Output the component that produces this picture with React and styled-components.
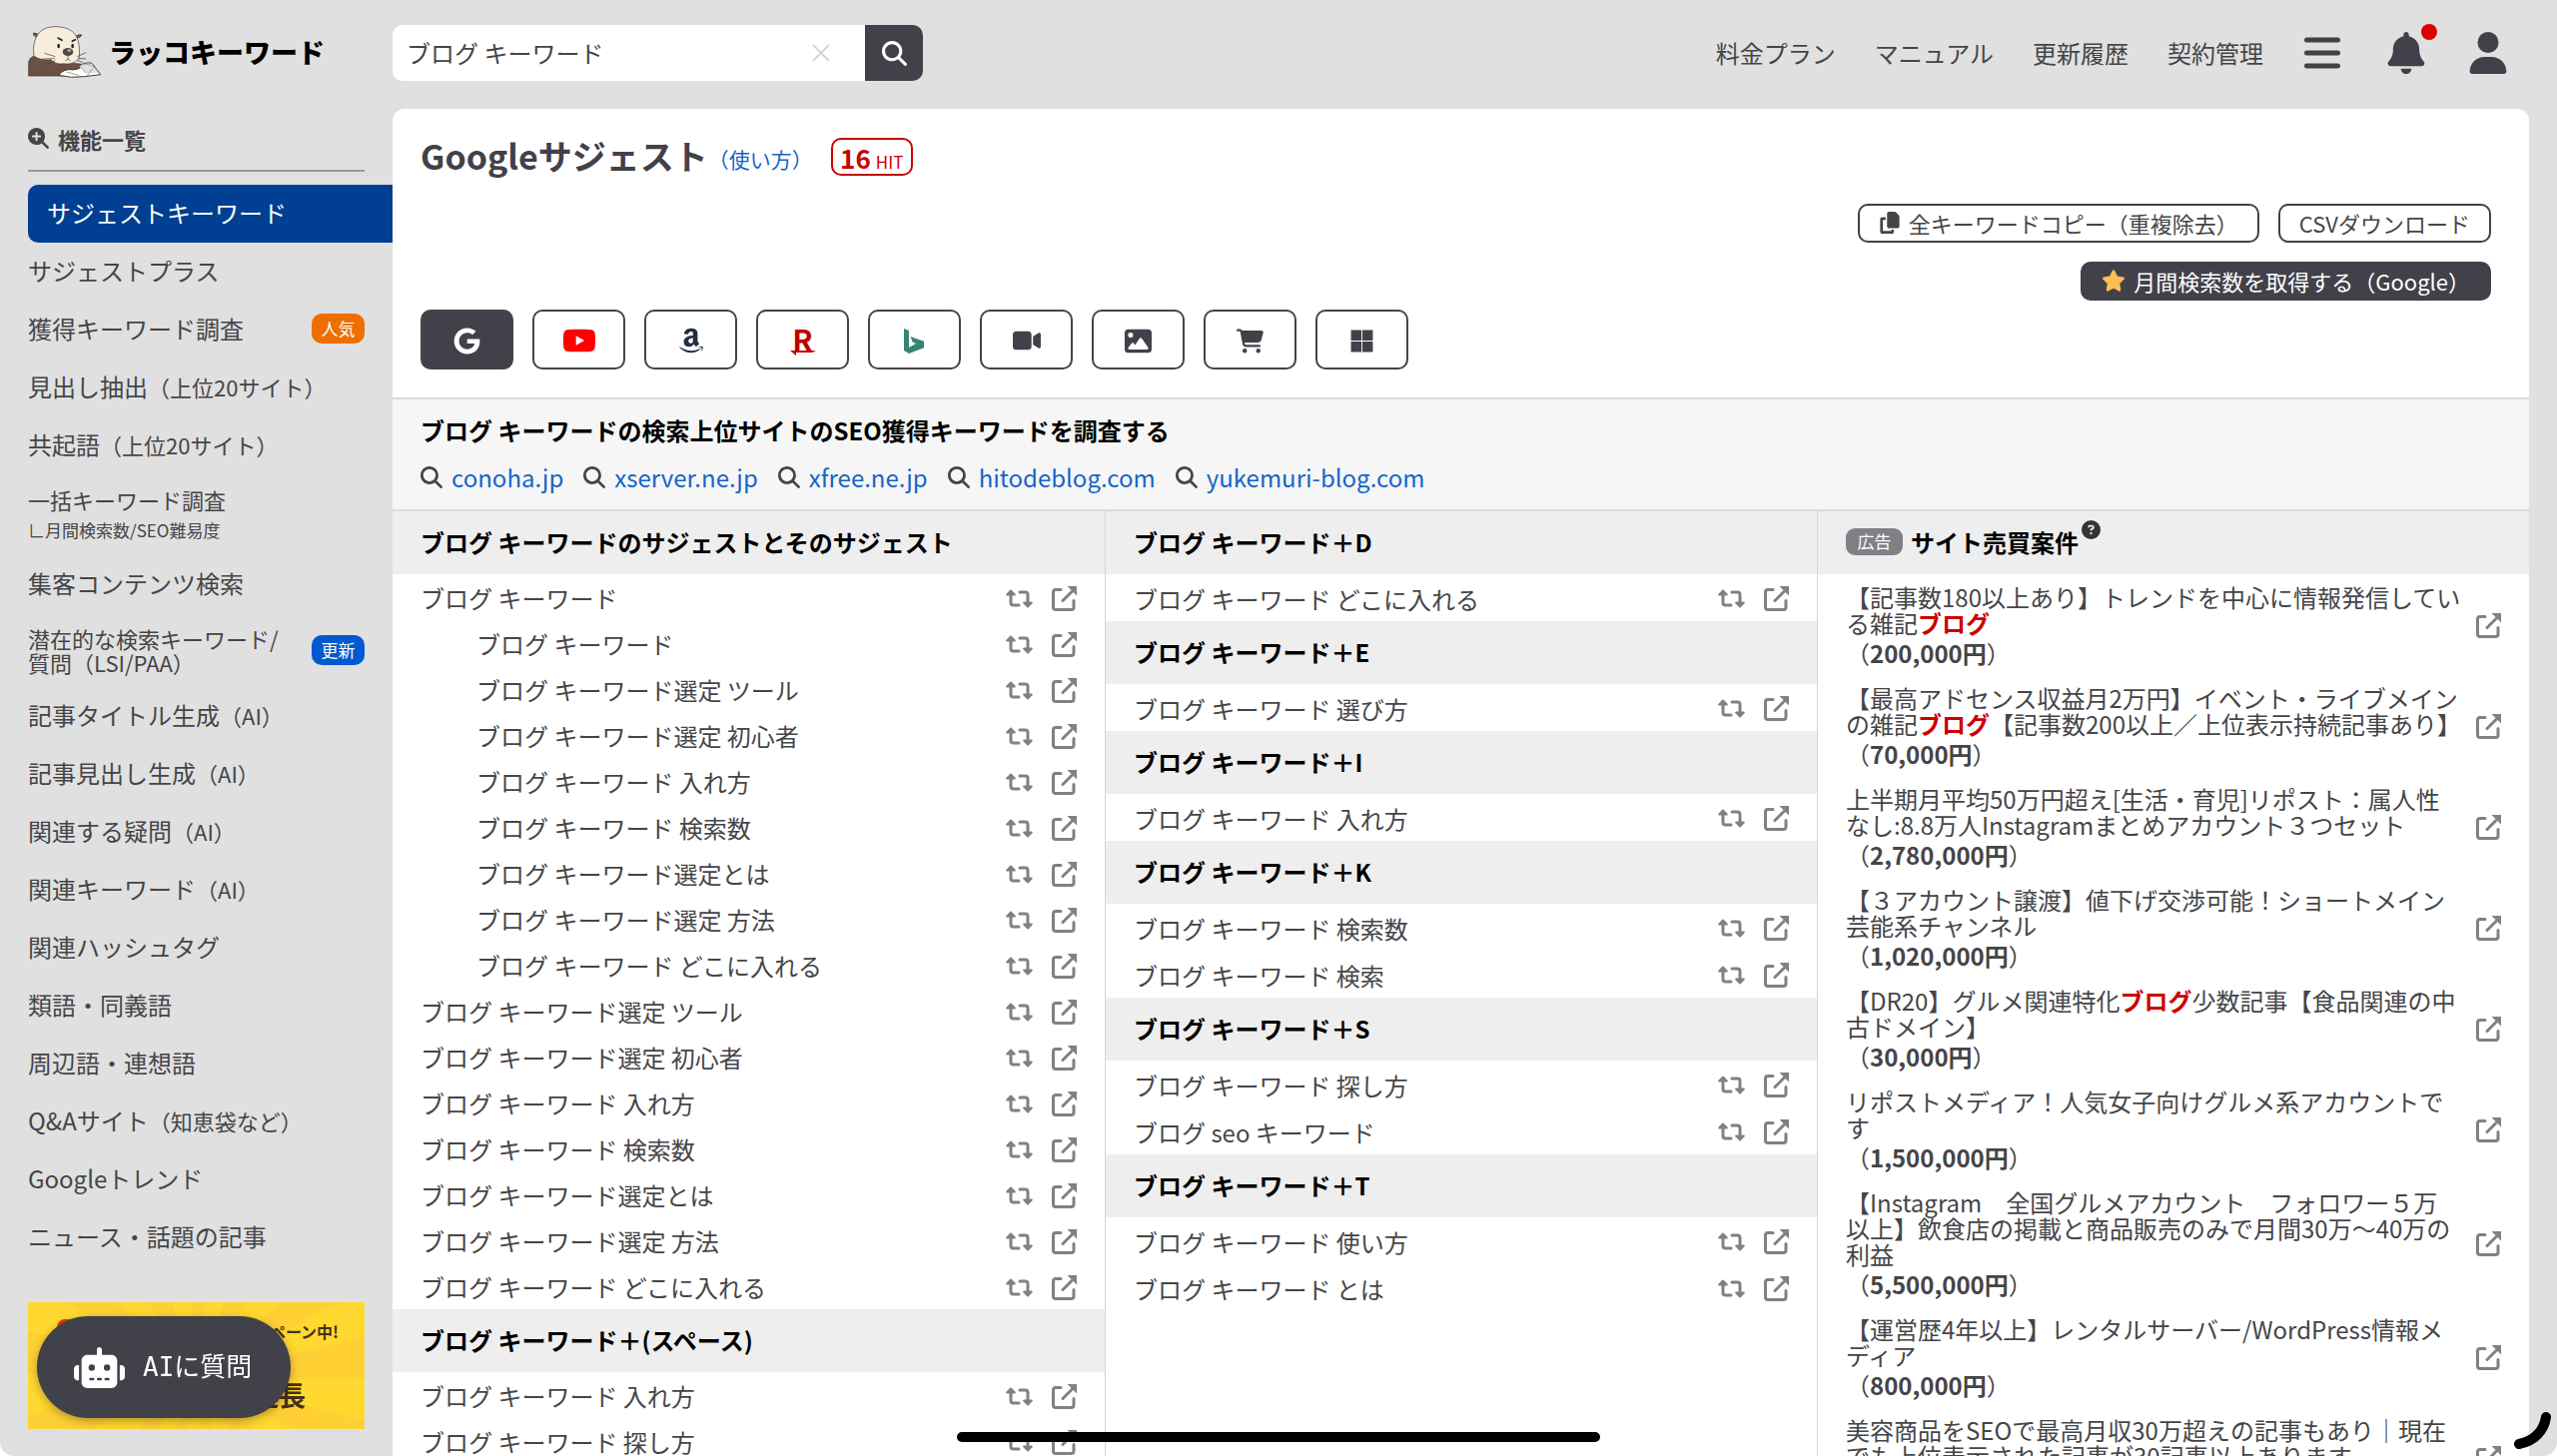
import React from "react";
import styled, { createGlobalStyle, css } from "styled-components";
import {
  FaAmazon,
  FaBell,
  FaCartShopping,
  FaCircleQuestion,
  FaCopy,
  FaGoogle,
  FaImage,
  FaMagnifyingGlass,
  FaMagnifyingGlassPlus,
  FaMicrosoft,
  FaRobot,
  FaStar,
  FaUser,
  FaVideo,
  FaYoutube,
} from "react-icons/fa6";

const dark = "#414149";
const text = "#454548";
const grey = "#808087";
const line = "#dcdcdc";
const blue = "#1465c9";
const red = "#cb0000";

const GlobalStyle = createGlobalStyle`
  *, *::before, *::after {
    box-sizing: border-box;
  }
  body {
    margin: 0;
    background: #fff;
    color: ${text};
    font-family: "Noto Sans CJK JP", "Noto Sans", sans-serif;
    font-size: 24px;
    line-height: 36px;
  }
  h1, h2, ul, p {
    margin: 0;
    padding: 0;
  }
  ul {
    list-style: none;
  }
  a {
    color: inherit;
    text-decoration: none;
  }
  button, input {
    margin: 0;
    padding: 0;
    border: 0;
    background: none;
    color: inherit;
    font: inherit;
  }
  svg {
    display: block;
    flex: none;
  }
`;

/* ---------- frame ---------- */

const Page = styled.div`
  display: flex;
  flex-direction: column;
  height: 100vh;
  overflow: hidden;
  background: #e0e0e0;
  border-radius: 0 0 14px 14px;
`;

const Header = styled.header`
  display: flex;
  align-items: center;
  padding: 25px 52px 28px 28px;
`;

const Logo = styled.a`
  display: flex;
  align-items: center;
  gap: 7px;
  width: 365px;
  padding-bottom: 2px;
  color: #000;
  font-size: 27px;
  font-weight: 900;
`;

const SearchForm = styled.form`
  display: flex;
  height: 56px;
  overflow: hidden;
  border-radius: 10px;
  background: #fff;
`;

const SearchInput = styled.input`
  width: 412px;
  padding-left: 14px;
  outline: none;
`;

const ClearButton = styled.button`
  width: 34px;
  margin-right: 27px;
  display: grid;
  place-items: center;
  color: #d4d4d4;
`;

const SearchButton = styled.button`
  display: grid;
  place-items: center;
  width: 58px;
  background: ${dark};
  color: #fff;
`;

const HeaderNav = styled.nav`
  display: flex;
  gap: 39px;
  margin-left: auto;
`;

const HeaderIcons = styled.div`
  display: flex;
  align-items: center;
  gap: 44px;
  margin-left: 40px;
  color: ${dark};
`;

const IconButton = styled.button`
  position: relative;
  display: grid;
  place-items: center;
  width: 38px;
  height: 42px;
`;

const NewDot = styled.span`
  position: absolute;
  top: -8px;
  right: -14px;
  width: 16px;
  height: 16px;
  border-radius: 50%;
  background: #dd0000;
`;

const Body = styled.div`
  display: flex;
  flex: 1;
  min-height: 0;
  padding-right: 28px;
`;

/* ---------- sidebar ---------- */

const Sidebar = styled.aside`
  flex: none;
  width: 393px;
  padding-left: 28px;
`;

const SidebarTitle = styled.h2`
  display: flex;
  align-items: center;
  gap: 9px;
  height: 63px;
  margin: 0 28px 13px 0;
  padding-bottom: 2px;
  border-bottom: 2px solid #9a9a9a;
  font-size: 22px;
  font-weight: 700;
`;

const MenuItem = styled.a`
  display: flex;
  align-items: center;
  justify-content: space-between;
  min-height: 58px;
  padding: 0 28px 3px 0;
  font-size: ${({ $small }) => ($small ? "22px" : "24px")};
  line-height: 24px;
  ${({ $small }) =>
    $small &&
    css`
      padding-top: 13px;
      padding-bottom: 13px;
    `}
  ${({ $active }) =>
    $active &&
    css`
      padding-left: 19px;
      border-radius: 10px 0 0 10px;
      background: #003f92;
      color: #fff;
    `}
`;

const MenuNote = styled.span`
  font-size: 22px;
`;

const MenuSub = styled.span`
  display: block;
  padding-top: 7px;
  font-size: 17px;
`;

const MenuBadge = styled.span`
  display: grid;
  place-items: center;
  width: 53px;
  height: 30px;
  border-radius: 10px;
  background: ${({ $color }) => $color};
  color: #fff;
  font-size: 17px;
`;

const Banner = styled.a`
  position: relative;
  display: block;
  height: 127px;
  margin: 36px 28px 0 0;
  overflow: hidden;
  background: repeating-conic-gradient(
    from 6deg at 50% 60%,
    #ffd92f 0deg 14deg,
    #ffd033 14deg 28deg
  );
  color: #46301c;
  font-weight: 700;
`;

const BannerLead = styled.span`
  position: absolute;
  top: 11px;
  right: 26px;
  font-size: 16px;
`;

const BannerMain = styled.span`
  position: absolute;
  top: 75px;
  right: 59px;
  font-size: 27px;
`;

const BannerMark = styled.i`
  position: absolute;
  top: 17px;
  left: 29px;
  width: 16px;
  height: 14px;
  border-radius: 8px 4px;
  background: #e8380d;
`;

const AskButton = styled.button`
  position: fixed;
  bottom: 38px;
  left: 37px;
  display: flex;
  align-items: center;
  gap: 18px;
  width: 254px;
  height: 102px;
  padding-left: 37px;
  border-radius: 51px;
  background: ${dark};
  box-shadow: 0 3px 10px rgba(0, 0, 0, 0.3);
  color: #fff;
  font-family: "DejaVu Sans Mono", "Noto Sans CJK JP", sans-serif;
  font-size: 26px;
`;

/* ---------- main panel ---------- */

const Panel = styled.main`
  display: flex;
  flex: 1;
  flex-direction: column;
  min-width: 0;
  overflow: hidden;
  border-radius: 12px 12px 0 0;
  background: #fff;
`;

const PanelHead = styled.section`
  padding: 23px 38px 28px 28px;
`;

const TitleRow = styled.div`
  display: flex;
  align-items: center;
  height: 50px;
`;

const Title = styled.h1`
  padding-bottom: 3px;
  color: ${dark};
  font-size: 34px;
  font-weight: 700;
`;

const HowTo = styled.a`
  padding-top: 4px;
  color: ${blue};
  font-size: 21px;
`;

const Hits = styled.span`
  display: flex;
  align-items: baseline;
  justify-content: center;
  gap: 5px;
  width: 82px;
  height: 38px;
  margin-left: 18px;
  border: 2px solid ${red};
  border-radius: 10px;
  color: ${red};
  font-size: 17px;
`;

const HitCount = styled.b`
  font-size: 26px;
`;

const Actions = styled.div`
  display: flex;
  flex-wrap: wrap;
  justify-content: flex-end;
  gap: 19px;
  width: 660px;
  margin: 22px 0 9px auto;
`;

const ActionButton = styled.button`
  display: flex;
  align-items: center;
  gap: 8px;
  height: 39px;
  padding: 0 19px 2px;
  border: 2px solid ${dark};
  border-radius: 10px;
  background: ${({ $filled }) => ($filled ? dark : "#fff")};
  color: ${({ $filled }) => ($filled ? "#fff" : text)};
  font-size: 22px;
  white-space: nowrap;
`;

const Engines = styled.div`
  display: flex;
  gap: 19px;
`;

const EngineButton = styled.button`
  display: grid;
  place-items: center;
  align-content: center;
  width: 93px;
  height: 60px;
  padding-top: 2px;
  border: 2px solid #444449;
  border-radius: 10px;
  background: ${({ $active }) => ($active ? dark : "#fff")};
  color: ${({ $color }) => $color || dark};
`;

const RakutenLetter = styled.b`
  font-size: 30px;
  line-height: 24px;
`;

const SeoSection = styled.section`
  padding: 13px 28px 14px;
  border-top: 2px solid ${line};
  background: #f6f6f6;
`;

const SeoTitle = styled.h2`
  color: #000;
  font-size: 24px;
  font-weight: 700;
`;

const SeoLinks = styled.ul`
  display: flex;
  gap: 20px;
  margin-top: 11px;
`;

const SeoLink = styled.li`
  display: flex;
  align-items: center;
  gap: 9px;

  a {
    color: ${blue};
  }
`;

const Columns = styled.div`
  display: grid;
  flex: 1;
  grid-template-columns: repeat(3, minmax(0, 1fr));
  min-height: 0;
  border-top: 2px solid ${line};
`;

const Column = styled.section`
  & + & {
    border-left: 1px solid #d6d6d6;
  }
`;

const GroupTitle = styled.h2`
  display: flex;
  align-items: center;
  height: 63px;
  padding: 0 28px 2px;
  background: #eee;
  color: #000;
  font-size: 24px;
  font-weight: 700;
`;

const KeywordRow = styled.li`
  display: flex;
  align-items: center;
  gap: 19px;
  height: ${({ $roomy }) => ($roomy ? "47px" : "46px")};
  padding: 2px 28px 0 ${({ $child }) => ($child ? "84px" : "28px")};
`;

const Keyword = styled.a`
  flex: 1;
`;

const RowButton = styled.button`
  color: ${grey};
`;

const AdBadge = styled.span`
  width: 57px;
  height: 27px;
  margin-right: 8px;
  border-radius: 9px;
  background: ${grey};
  color: #fff;
  font-size: 17px;
  font-weight: 400;
  line-height: 26px;
  text-align: center;
`;

const HelpButton = styled.button`
  align-self: flex-start;
  margin: 9px 0 0 3px;
  color: #333338;
`;

const SiteList = styled.ul`
  padding: 10px 28px 0;
`;

const Site = styled.li`
  display: flex;
  align-items: center;
  gap: 15px;
  margin-bottom: 19px;
  line-height: 26px;
`;

const SiteBody = styled.div`
  flex: 1;
`;

const Price = styled.p`
  padding-top: 4px;
`;

const Mark = styled.b`
  color: ${red};
`;

/* ---------- bottom edge ---------- */

const HomeBar = styled.div`
  position: fixed;
  bottom: 14px;
  left: 50%;
  width: 644px;
  height: 10px;
  margin-left: -322px;
  border-radius: 5px;
  background: #000;
`;

const CornerMark = styled.svg`
  position: fixed;
  right: 6px;
  bottom: 6px;
`;

/* ---------- drawings ---------- */

const Otter = () => (
  <svg width="74" height="53" viewBox="0 0 222 159" aria-hidden="true">
    <path
      d="M2 150V112c0-12 8-21 22-23l20 3 80 20 34 2 10 14-40 22z"
      fill="#6b5142"
      stroke="#3b2c25"
      strokeWidth="2"
    />
    <path
      d="M28 34c-10-2-13-9-11-13 6 1 10 3 14 5M146 36c9-1 14-5 15-9-7-1-12 1-17 4"
      fill="#7a6355"
      stroke="#3b2c25"
      strokeWidth="3"
    />
    <path
      d="M18 90c-5-34 5-62 22-76C62-3 110-2 134 17c20 18 22 48 20 78-8 16-28 21-48 18-14 3-28-2-38-12-16 4-38-2-50-11z"
      fill="#f7edda"
      stroke="#4a3a30"
      strokeWidth="2"
    />
    <path
      d="M90 36l12 7M142 41l-9 5"
      stroke="#222"
      strokeWidth="5"
      strokeLinecap="round"
    />
    <ellipse cx="92" cy="60" rx="4" ry="7" fill="#222" />
    <ellipse cx="134" cy="60" rx="4" ry="7" fill="#222" />
    <ellipse cx="120" cy="78" rx="16" ry="12" fill="#4e4947" />
    <ellipse cx="124" cy="74" rx="6" ry="4" fill="#aaa5a2" />
    <path
      d="M120 90v9l-8 6M120 99l8 6M82 92l-32-10M80 98l-38 1M82 104l-26 12M148 92l26-12M150 97l24 2M150 103l20 11"
      fill="none"
      stroke="#40342d"
      strokeWidth="2"
    />
    <path
      d="M92 148c8-12 26-20 42-16l20-4c4-14 22-20 38-16l26 34-48 6-40 2z"
      fill="#fff"
      stroke="#4a3a30"
      strokeWidth="3"
      strokeLinejoin="round"
    />
    <path
      d="M176 142l-22-22 14-6c18 0 34 8 44 26M178 150l16-22M116 138l36 10"
      fill="#e0e0e0"
      stroke="#77706b"
      strokeWidth="2"
    />
  </svg>
);

const Cross = () => (
  <svg width="18" height="18" viewBox="0 0 18 18" aria-hidden="true">
    <path d="M1 1l16 16M17 1L1 17" stroke="currentColor" strokeWidth="2" />
  </svg>
);

const Bars = () => (
  <svg width="36" height="32" viewBox="0 0 36 32" aria-hidden="true">
    <path
      d="M2.5 3h31M2.5 16h31M2.5 29h31"
      stroke="currentColor"
      strokeWidth="5"
      strokeLinecap="round"
    />
  </svg>
);

const Bing = () => (
  <svg width="21" height="25" viewBox="0 0 21 25" aria-hidden="true">
    <path
      d="M0 0l5 2v17l7-4-3.400-1.600L6.500 8 20 12.700v6.500L5 25l-5-3z"
      fill="currentColor"
    />
  </svg>
);

const RakutenLine = () => (
  <svg width="26" height="5" viewBox="0 0 26 5" aria-hidden="true">
    <path d="M0 0h26l-4 2H6v3z" fill="currentColor" />
  </svg>
);

const Swap = () => (
  <svg width="27" height="19" viewBox="0 0 27 19" aria-hidden="true">
    <path
      d="M5 5v8.500q0 2.500 2.500 2.500H13M14 3h5.500Q22 3 22 5.500V14"
      fill="none"
      stroke="currentColor"
      strokeWidth="3"
      strokeLinecap="round"
    />
    <path
      d="M5 1.500L1.200 5.500h7.600zM22 17.500l-3.800-4h7.600z"
      fill="currentColor"
      stroke="currentColor"
      strokeWidth="2"
      strokeLinejoin="round"
    />
  </svg>
);

const External = () => (
  <svg width="25" height="25" viewBox="0 0 25 25" aria-hidden="true">
    <path
      d="M9 3.500H4Q1.500 3.500 1.500 6v15Q1.500 23.500 4 23.500h15.500Q22 23.500 22 21v-6.500M11 14.500l9-9"
      fill="none"
      stroke="currentColor"
      strokeWidth="3"
      strokeLinecap="round"
    />
    <path d="M15.500 0H25v9.500z" fill="currentColor" />
  </svg>
);

/* ---------- data ---------- */

const navLinks = ["料金プラン", "マニュアル", "更新履歴", "契約管理"];

const menu = [
  { label: "サジェストキーワード", active: true },
  { label: "サジェストプラス" },
  { label: "獲得キーワード調査", badge: "人気", color: "#ee6f00" },
  { label: "見出し抽出", note: "（上位20サイト）" },
  { label: "共起語", note: "（上位20サイト）" },
  { label: "一括キーワード調査", small: true, sub: "∟月間検索数/SEO難易度" },
  { label: "集客コンテンツ検索" },
  {
    label: (
      <>
        潜在的な検索キーワード/
        <br />
        質問（LSI/PAA）
      </>
    ),
    small: true,
    badge: "更新",
    color: "#0059cf",
  },
  { label: "記事タイトル生成", note: "（AI）" },
  { label: "記事見出し生成", note: "（AI）" },
  { label: "関連する疑問", note: "（AI）" },
  { label: "関連キーワード", note: "（AI）" },
  { label: "関連ハッシュタグ" },
  { label: "類語・同義語" },
  { label: "周辺語・連想語" },
  { label: "Q&Aサイト", note: "（知恵袋など）" },
  { label: "Googleトレンド" },
  { label: "ニュース・話題の記事" },
];

const engines = [
  { name: "Google", icon: <FaGoogle size={27} />, color: "#fff", active: true },
  { name: "YouTube", icon: <FaYoutube size={34} />, color: "#f00" },
  { name: "Amazon", icon: <FaAmazon size={28} />, color: "#232f3e" },
  {
    name: "楽天",
    icon: (
      <>
        <RakutenLetter>R</RakutenLetter>
        <RakutenLine />
      </>
    ),
    color: "#bf0000",
  },
  { name: "Bing", icon: <Bing />, color: "#378472" },
  { name: "動画", icon: <FaVideo size={28} /> },
  { name: "画像", icon: <FaImage size={27} /> },
  { name: "ショッピング", icon: <FaCartShopping size={27} /> },
  { name: "Microsoft", icon: <FaMicrosoft size={25} /> },
];

const domains = [
  "conoha.jp",
  "xserver.ne.jp",
  "xfree.ne.jp",
  "hitodeblog.com",
  "yukemuri-blog.com",
];

const base = "ブログ キーワード";
const suggests = [
  "選定 ツール",
  "選定 初心者",
  " 入れ方",
  " 検索数",
  "選定とは",
  "選定 方法",
  " どこに入れる",
].map((tail) => base + tail);

const leftGroups = [
  {
    title: `${base}のサジェストとそのサジェスト`,
    rows: [
      { word: base },
      { word: base, child: true },
      ...suggests.map((word) => ({ word, child: true })),
      ...suggests.map((word) => ({ word })),
    ],
  },
  {
    title: `${base}＋(スペース)`,
    rows: [{ word: `${base} 入れ方` }, { word: `${base} 探し方` }],
  },
];

const middleGroups = [
  { title: `${base}＋D`, rows: [{ word: `${base} どこに入れる` }] },
  { title: `${base}＋E`, rows: [{ word: `${base} 選び方` }] },
  { title: `${base}＋I`, rows: [{ word: `${base} 入れ方` }] },
  {
    title: `${base}＋K`,
    rows: [{ word: `${base} 検索数` }, { word: `${base} 検索` }],
  },
  {
    title: `${base}＋S`,
    rows: [{ word: `${base} 探し方` }, { word: "ブログ seo キーワード" }],
  },
  {
    title: `${base}＋T`,
    rows: [{ word: `${base} 使い方` }, { word: `${base} とは` }],
  },
];

const sites = [
  {
    title: "【記事数180以上あり】トレンドを中心に情報発信している雑記ブログ",
    price: "200,000円",
  },
  {
    title:
      "【最高アドセンス収益月2万円】イベント・ライブメインの雑記ブログ【記事数200以上／上位表示持続記事あり】",
    price: "70,000円",
  },
  {
    title:
      "上半期月平均50万円超え[生活・育児]リポスト：属人性なし:8.8万人Instagramまとめアカウント３つセット",
    price: "2,780,000円",
  },
  {
    title: "【３アカウント譲渡】値下げ交渉可能！ショートメイン芸能系チャンネル",
    price: "1,020,000円",
  },
  {
    title: "【DR20】グルメ関連特化ブログ少数記事【食品関連の中古ドメイン】",
    price: "30,000円",
  },
  {
    title: "リポストメディア！人気女子向けグルメ系アカウントです",
    price: "1,500,000円",
  },
  {
    title:
      "【Instagram　全国グルメアカウント　フォロワー５万以上】飲食店の掲載と商品販売のみで月間30万〜40万の利益",
    price: "5,500,000円",
  },
  {
    title: "【運営歴4年以上】レンタルサーバー/WordPress情報メディア",
    price: "800,000円",
  },
  {
    title:
      "美容商品をSEOで最高月収30万超えの記事もあり｜現在でも上位表示された記事が30記事以上あります",
    price: "1,000,000円",
  },
];

/* ---------- parts ---------- */

const highlight = (title) =>
  title
    .split(/(ブログ)/)
    .map((part, idx) => (part === "ブログ" ? <Mark key={idx}>{part}</Mark> : part));

const KeywordGroups = ({ groups, roomy }) => (
  <Column>
    {groups.map(({ title, rows }) => (
      <React.Fragment key={title}>
        <GroupTitle>{title}</GroupTitle>
        <ul>
          {rows.map(({ word, child }, idx) => (
            <KeywordRow key={idx} $child={child} $roomy={roomy}>
              <Keyword href="#">{word}</Keyword>
              <RowButton type="button" aria-label="再検索">
                <Swap />
              </RowButton>
              <RowButton type="button" aria-label="新しいタブで開く">
                <External />
              </RowButton>
            </KeywordRow>
          ))}
        </ul>
      </React.Fragment>
    ))}
  </Column>
);

const App = () => {
  return (
    <>
      <GlobalStyle />
      <Page>
        <Header>
          <Logo href="#">
            <Otter />
            ラッコキーワード
          </Logo>
          <SearchForm onSubmit={(e) => e.preventDefault()}>
            <SearchInput aria-label="キーワード" defaultValue={base} />
            <ClearButton type="reset" aria-label="クリア">
              <Cross />
            </ClearButton>
            <SearchButton type="submit" aria-label="検索">
              <FaMagnifyingGlass size={25} />
            </SearchButton>
          </SearchForm>
          <HeaderNav>
            {navLinks.map((label) => (
              <a key={label} href="#">
                {label}
              </a>
            ))}
          </HeaderNav>
          <HeaderIcons>
            <IconButton type="button" aria-label="メニュー">
              <Bars />
            </IconButton>
            <IconButton type="button" aria-label="お知らせ">
              <FaBell size={42} />
              <NewDot />
            </IconButton>
            <IconButton type="button" aria-label="アカウント">
              <FaUser size={42} />
            </IconButton>
          </HeaderIcons>
        </Header>

        <Body>
          <Sidebar>
            <SidebarTitle>
              <FaMagnifyingGlassPlus size={21} />
              機能一覧
            </SidebarTitle>
            <nav>
              {menu.map(({ label, note, sub, badge, color, small, active }, idx) => (
                <MenuItem key={idx} href="#" $small={small} $active={active}>
                  <span>
                    {label}
                    {note && <MenuNote>{note}</MenuNote>}
                    {sub && <MenuSub>{sub}</MenuSub>}
                  </span>
                  {badge && <MenuBadge $color={color}>{badge}</MenuBadge>}
                </MenuItem>
              ))}
            </nav>
            <Banner href="#">
              <BannerMark />
              <BannerLead>キャンペーン中!</BannerLead>
              <BannerMain>延長</BannerMain>
            </Banner>
          </Sidebar>

          <Panel>
            <PanelHead>
              <TitleRow>
                <Title>Googleサジェスト</Title>
                <HowTo href="#">（使い方）</HowTo>
                <Hits>
                  <HitCount>16</HitCount>HIT
                </Hits>
              </TitleRow>
              <Actions>
                <ActionButton type="button">
                  <FaCopy size={22} />
                  全キーワードコピー（重複除去）
                </ActionButton>
                <ActionButton type="button">CSVダウンロード</ActionButton>
                <ActionButton type="button" $filled>
                  <FaStar size={24} color="#ffbe55" />
                  月間検索数を取得する（Google）
                </ActionButton>
              </Actions>
              <Engines>
                {engines.map(({ name, icon, color, active }) => (
                  <EngineButton
                    key={name}
                    type="button"
                    aria-label={name}
                    $color={color}
                    $active={active}
                  >
                    {icon}
                  </EngineButton>
                ))}
              </Engines>
            </PanelHead>

            <SeoSection>
              <SeoTitle>{base}の検索上位サイトのSEO獲得キーワードを調査する</SeoTitle>
              <SeoLinks>
                {domains.map((domain) => (
                  <SeoLink key={domain}>
                    <FaMagnifyingGlass size={22} />
                    <a href="#">{domain}</a>
                  </SeoLink>
                ))}
              </SeoLinks>
            </SeoSection>

            <Columns>
              <KeywordGroups groups={leftGroups} />
              <KeywordGroups groups={middleGroups} roomy />
              <Column>
                <GroupTitle>
                  <AdBadge>広告</AdBadge>
                  サイト売買案件
                  <HelpButton type="button" aria-label="ヘルプ">
                    <FaCircleQuestion size={19} />
                  </HelpButton>
                </GroupTitle>
                <SiteList>
                  {sites.map(({ title, price }) => (
                    <Site key={title}>
                      <SiteBody>
                        <a href="#">{highlight(title)}</a>
                        <Price>
                          （<b>{price}</b>）
                        </Price>
                      </SiteBody>
                      <RowButton type="button" aria-label="新しいタブで開く">
                        <External />
                      </RowButton>
                    </Site>
                  ))}
                </SiteList>
              </Column>
            </Columns>
          </Panel>
        </Body>
      </Page>
      <AskButton type="button">
        <FaRobot size={51} />
        AIに質問
      </AskButton>
      <HomeBar />
      <CornerMark width="38" height="38" viewBox="0 0 38 38" aria-hidden="true">
        <path
          d="M33 5C31 19 21 29 6 32"
          fill="none"
          stroke="#000"
          strokeWidth="10"
          strokeLinecap="round"
        />
      </CornerMark>
    </>
  );
};

export default App;
